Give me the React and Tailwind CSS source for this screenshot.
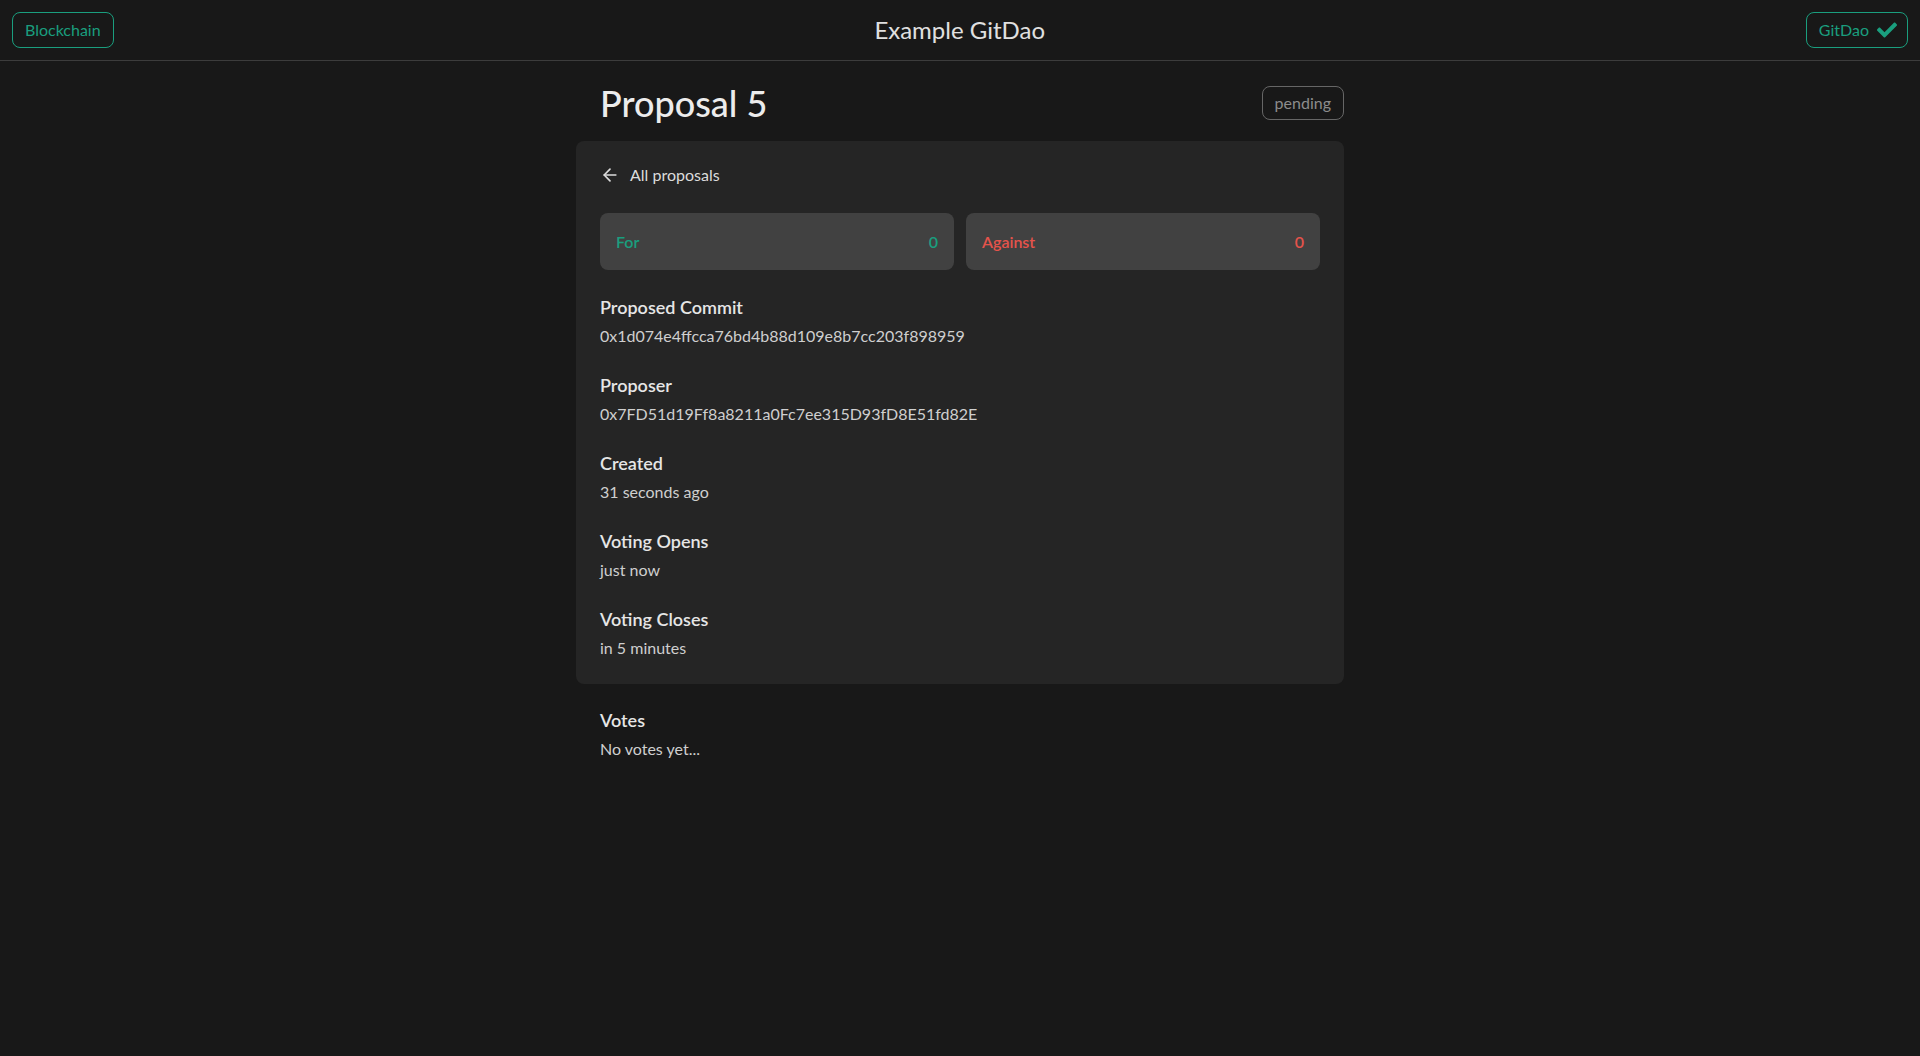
import { ArrowLeft } from "lucide-react";
import { FaCheck } from "react-icons/fa";

const details = [
  { label: "Proposed Commit", value: "0x1d074e4ffcca76bd4b88d109e8b7cc203f898959" },
  { label: "Proposer", value: "0x7FD51d19Ff8a8211a0Fc7ee315D93fD8E51fd82E" },
  { label: "Created", value: "31 seconds ago" },
  { label: "Voting Opens", value: "just now" },
  { label: "Voting Closes", value: "in 5 minutes" },
];

function Detail({ label, value }) {
  return (
    <div>
      <p className="text-lg font-semibold leading-7 text-[#e6e6e6]">{label}</p>
      <p className="mt-[3px] text-base leading-6 text-[#cfcfcf]">{value}</p>
    </div>
  );
}

function Tally({ label, count, tone }) {
  return (
    <div className={`flex h-[57px] items-center justify-between rounded-lg bg-[#414141] px-4 text-base font-semibold ${tone}`}>
      <span>{label}</span>
      <span>{count}</span>
    </div>
  );
}

export default function App() {
  return (
    <div className="min-h-screen bg-[#181818] text-[#e6e6e6]" style={{ fontFamily: "Lato, 'Open Sans', sans-serif" }}>
      <header className="flex h-[61px] items-center justify-between border-b border-[#3c3c3c] px-3">
        <button className="rounded-lg border border-[#1a9e7e] px-3 py-[5px] text-base leading-6 text-[#1a9e7e]">
          Blockchain
        </button>
        <h1 className="text-2xl text-[#e0e0e0]">Example GitDao</h1>
        <button className="flex items-center gap-2 rounded-lg border border-[#1a9e7e] py-[5px] pl-3 pr-2.5 text-base leading-6 text-[#1a9e7e]">
          GitDao
          <FaCheck className="h-5 w-5" />
        </button>
      </header>

      <main className="mx-auto max-w-3xl">
        <div className="mt-[22px] flex items-center justify-between pl-6">
          <h2 className="text-4xl font-medium leading-10 text-[#ececec]">Proposal 5</h2>
          <span className="rounded-lg border border-[#666] px-3 py-1 text-base leading-6 text-[#8c8c8c]">pending</span>
        </div>

        <section className="mt-[18px] rounded-lg bg-[#252525] p-6">
          <a className="flex h-5 items-center gap-2.5 text-base leading-5 text-[#dcdcdc]" href="#">
            <ArrowLeft className="h-5 w-5" strokeWidth={2} />
            All proposals
          </a>

          <div className="mt-7 grid grid-cols-2 gap-3">
            <Tally label="For" count={0} tone="text-[#1a9e7e]" />
            <Tally label="Against" count={0} tone="text-[#e5534b]" />
          </div>

          <div className="mt-[23px] flex flex-col gap-[23px]">
            {details.map((d) => (
              <Detail key={d.label} label={d.label} value={d.value} />
            ))}
          </div>
        </section>

        <section className="mt-[22px] px-6">
          <Detail label="Votes" value="No votes yet..." />
        </section>
      </main>
    </div>
  );
}
